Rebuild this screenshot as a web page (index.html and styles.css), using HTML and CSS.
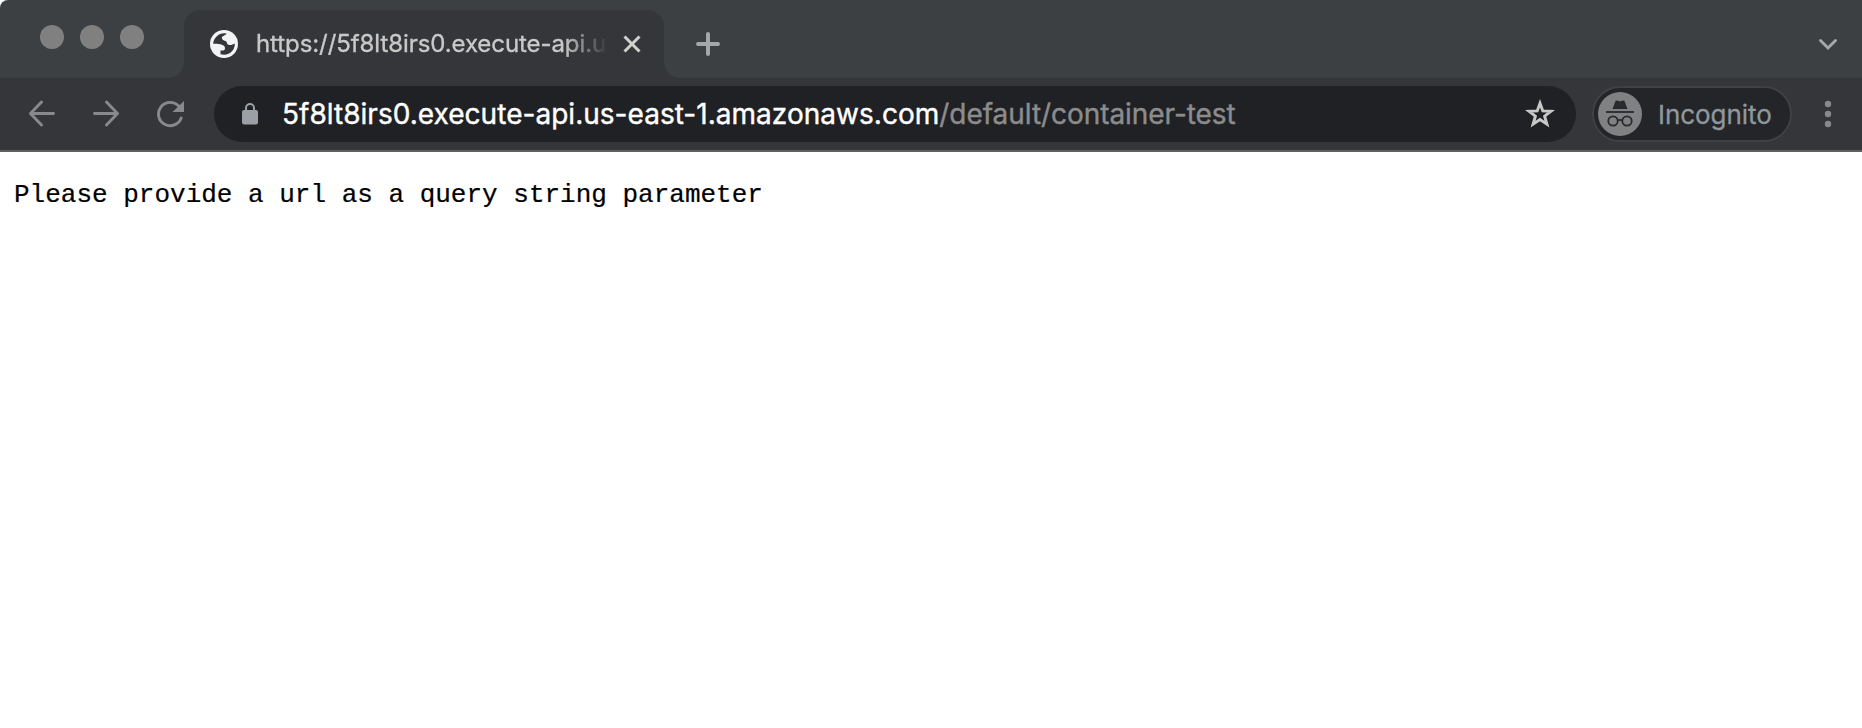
FILE: index.html
```
<!DOCTYPE html>
<html lang="en">
<head>
<meta charset="utf-8">
<title>Browser window</title>
<link rel="stylesheet" href="styles.css">
</head>
<body>
<div class="window">
  <header class="tabstrip">
    <div class="lights"><span class="light"></span><span class="light"></span><span class="light"></span></div>
    <div class="tab">
      <svg class="globe" width="28" height="28" viewBox="0 0 28 28"><circle cx="14" cy="14" r="14" fill="#f1f3f4"/><path d="M3.2 13.800C3.400 8 8.500 3.200 14.200 3.200L16.500 3.500C16 5.500 12.500 5.500 11.900 7.500C11.500 9.500 13.500 10.600 15.300 11C17.500 11.800 16.500 14 18.500 14.800C20.500 15.500 23 14.600 24.800 13.500C25 19.500 20.500 24.700 14.200 24.800L10.500 24.200V20.500H13.500C15 20 15.200 18.500 14.800 17C13.500 14.300 8 13.800 3.200 13.800Z" fill="#35363a"/></svg>
      <span class="tab-title">https://5f8lt8irs0.execute-api.u</span>
      <svg class="close" width="18" height="18" viewBox="0 0 18 18" fill="none" stroke="#d0d0cf" stroke-width="3"><path d="M1.500 1.500L16.500 16.500M16.500 1.500L1.500 16.500"/></svg>
    </div>
    <svg class="plus" width="24" height="24" viewBox="0 0 24 24" stroke="#a4a8ab" stroke-width="4" stroke-linecap="round"><path d="M12 2V22M2 12H22"/></svg>
    <svg class="chevron" width="20" height="14" viewBox="0 0 20 14" fill="none" stroke="#a4a8ab" stroke-width="3" stroke-linecap="round"><path d="M2.500 2.500L10 10L17.500 2.500"/></svg>
  </header>
  <nav class="toolbar">
    <svg class="nav-icon" width="28" height="28" viewBox="0 0 28 28" fill="none" stroke="#88898c" stroke-width="2.900" stroke-linecap="round" stroke-linejoin="round"><path d="M25.500 13.500H2.500M13.500 2L2.500 13.500L13.500 25"/></svg>
    <svg class="nav-icon" width="28" height="28" viewBox="0 0 28 28" fill="none" stroke="#88898c" stroke-width="2.900" stroke-linecap="round" stroke-linejoin="round"><path d="M2.500 13.500H25.500M14.500 2L25.500 13.500L14.500 25"/></svg>
    <svg class="nav-icon" width="28" height="28" viewBox="0 0 28 28" fill="none"><path d="M25.200 18A11.700 11.700 0 1 1 22.500 5.800" stroke="#88898c" stroke-width="2.900" stroke-linecap="round"/><path d="M28 1V12H16.500Z" fill="#88898c"/></svg>
    <div class="omnibox">
      <svg class="lock" width="16" height="22" viewBox="0 0 16 22"><path d="M4 9V5A4 4 0 0 1 12 5V9" fill="none" stroke="#9aa0a6" stroke-width="2"/><rect y="7" width="16" height="14.500" rx="2" fill="#9aa0a6"/></svg>
      <span class="url"><span class="host">5f8lt8irs0.execute-api.us-east-1.amazonaws.com</span><span class="path">/default/container-test</span></span>
      <svg class="star" width="30" height="30" viewBox="0 0 30 30"><path d="M15 4.200L17.800 11.900L26 12.200L19.600 17.200L21.900 25.200L15 20.600L8.100 25.200L10.400 17.200L4 12.200L12.200 11.900Z" fill="none" stroke="#c8c8c6" stroke-width="2.900"/></svg>
    </div>
    <div class="incognito">
      <svg width="44" height="44" viewBox="0 0 44 44"><circle cx="22" cy="22" r="22" fill="#808183"/><path d="M14.500 17L17.500 9Q18.500 8 22 9.500Q25.500 8 26.500 9L29.500 17Z" fill="#292a2d"/><path d="M8 20H36" stroke="#292a2d" stroke-width="1.800"/><g fill="none" stroke="#292a2d" stroke-width="1.800"><circle cx="15" cy="29" r="4.700"/><circle cx="29" cy="29" r="4.700"/><path d="M19.700 28.500Q22 27.300 24.300 28.500"/></g></svg>
      <span class="incognito-label">Incognito</span>
    </div>
    <svg class="menu" width="8" height="28" viewBox="0 0 8 28" fill="#88898c"><circle cx="4" cy="4" r="3.200"/><circle cx="4" cy="14" r="3.200"/><circle cx="4" cy="24" r="3.200"/></svg>
  </nav>
  <main class="page"><pre class="message">Please provide a url as a query string parameter</pre></main>
</div>
</body>
</html>
```
FILE: styles.css
```
* { box-sizing: border-box; }
body { margin: 0; background: #fff; font-family: Inter, "Liberation Sans", sans-serif; }
svg { display: block; flex: none; }
.window { height: 728px; display: flex; flex-direction: column; overflow: hidden; border-top-left-radius: 8px; }
.tabstrip { height: 78px; background: #3c4043; display: flex; align-items: flex-start; }
.lights { display: flex; gap: 16px; width: 184px; padding: 25px 0 0 40px; }
.light { width: 24px; height: 24px; border-radius: 50%; background: #808080; }
.tab { position: relative; width: 480px; height: 68px; margin-top: 10px; padding-left: 26px; display: flex; align-items: center; background: #35363a; border-radius: 16px 16px 0 0; }
.tab::before, .tab::after { content: ""; position: absolute; bottom: 0; width: 16px; height: 16px; }
.tab::before { left: -16px; background: radial-gradient(circle at 0 0, transparent 15.5px, #35363a 16px); }
.tab::after { right: -16px; background: radial-gradient(circle at 100% 0, transparent 15.5px, #35363a 16px); }
.tab-title { width: 354px; margin-left: 18px; white-space: nowrap; color: #c9c9c9; font-size: 24px; line-height: 34px; letter-spacing: -0.08px; -webkit-text-stroke: 0.35px currentColor; -webkit-mask-image: linear-gradient(90deg, #000 308px, transparent 352px); mask-image: linear-gradient(90deg, #000 308px, transparent 352px); }
.close { margin-left: 13px; }
.plus { margin: 32px 0 0 32px; }
.chevron { margin: 38px 24px 0 auto; }
.toolbar { height: 74px; background: #35363a; border-bottom: 2px solid #605c61; display: flex; align-items: center; padding-left: 28px; }
.nav-icon { margin-right: 36px; }
.nav-icon:nth-child(3) { margin-right: 30px; }
.omnibox { width: 1362px; height: 56px; border-radius: 28px; background: #202124; display: flex; align-items: center; padding: 0 21px 0 28px; }
.url { flex: 1; margin-left: 24px; font-size: 28px; line-height: 40px; white-space: nowrap; color: #fff; -webkit-text-stroke: 0.4px currentColor; }
.host { letter-spacing: 0.03px; }
.path { color: #8c8c8d; letter-spacing: -0.06px; }
.incognito { width: 200px; height: 56px; margin-left: 16px; border: 2px solid #3f4144; border-radius: 28px; background: #242529; display: flex; align-items: center; padding-left: 4px; }
.incognito-label { margin-left: 16px; font-size: 26px; letter-spacing: -0.05px; color: #90979d; -webkit-text-stroke: 0.3px currentColor; }
.menu { margin-left: 32px; }
.page { flex: 1; background: #fff; padding: 27px 14px; }
.message { margin: 0; font: 26px/32px "Courier New", "Liberation Mono", monospace; color: #000; -webkit-text-stroke: 0.2px currentColor; }
```
